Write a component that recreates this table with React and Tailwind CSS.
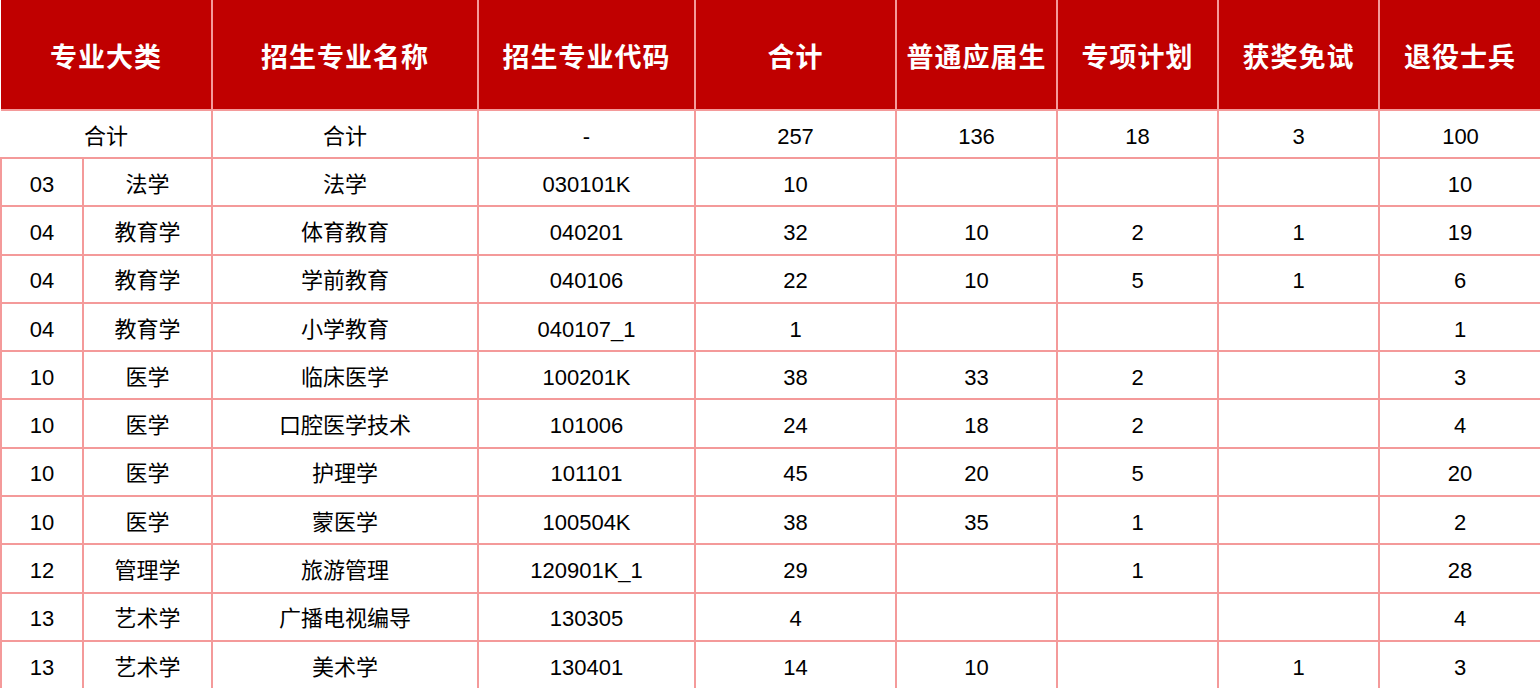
import React from "react";

const widths = [82, 129, 266, 217, 201, 161, 161, 161, 162];

const heads = ["招生专业名称", "招生专业代码", "合计", "普通应届生", "专项计划", "获奖免试", "退役士兵"];

const rows = [
  ["03", "法学", "法学", "030101K", "10", "", "", "", "10"],
  ["04", "教育学", "体育教育", "040201", "32", "10", "2", "1", "19"],
  ["04", "教育学", "学前教育", "040106", "22", "10", "5", "1", "6"],
  ["04", "教育学", "小学教育", "040107_1", "1", "", "", "", "1"],
  ["10", "医学", "临床医学", "100201K", "38", "33", "2", "", "3"],
  ["10", "医学", "口腔医学技术", "101006", "24", "18", "2", "", "4"],
  ["10", "医学", "护理学", "101101", "45", "20", "5", "", "20"],
  ["10", "医学", "蒙医学", "100504K", "38", "35", "1", "", "2"],
  ["12", "管理学", "旅游管理", "120901K_1", "29", "", "1", "", "28"],
  ["13", "艺术学", "广播电视编导", "130305", "4", "", "", "", "4"],
  ["13", "艺术学", "美术学", "130401", "14", "10", "", "1", "3"],
];

const font = { fontFamily: '"Liberation Sans", "Noto Sans CJK SC", sans-serif' };

export default function App() {
  return (
    <div className="w-[1540px] h-[688px] overflow-hidden bg-white" style={font}>
      <table className="w-[1540px] table-fixed border-collapse">
        <colgroup>
          {widths.map((w, i) => (
            <col key={i} style={{ width: w }} />
          ))}
        </colgroup>
        <thead>
          <tr className="h-[110px] bg-[#c00000] text-white">
            <th colSpan={2} className="border-r-2 border-[#f49a9a] pt-2 text-[27px] font-bold tracking-[1px]">
              专业大类
            </th>
            {heads.map((h) => (
              <th key={h} className="border-x-2 border-[#f49a9a] pt-2 text-[27px] font-bold tracking-[1px]">
                {h}
              </th>
            ))}
          </tr>
        </thead>
        <tbody className="text-[22px] text-black">
          <tr className="h-[48px]">
            <td colSpan={2} className="border-2 border-l-0 border-[#f49a9a] pt-1 text-center">合计</td>
            <td className="border-2 border-[#f49a9a] pt-1 text-center">合计</td>
            <td className="border-2 border-[#f49a9a] pt-1 text-center">-</td>
            <td className="border-2 border-[#f49a9a] pt-1 text-center">257</td>
            <td className="border-2 border-[#f49a9a] pt-1 text-center">136</td>
            <td className="border-2 border-[#f49a9a] pt-1 text-center">18</td>
            <td className="border-2 border-[#f49a9a] pt-1 text-center">3</td>
            <td className="border-2 border-r-0 border-[#f49a9a] pt-1 text-center">100</td>
          </tr>
          {rows.map((r, i) => (
            <tr key={i} className="h-[48.3px]">
              {r.map((c, j) => (
                <td key={j} className="border-2 border-[#f49a9a] pt-1 text-center">
                  {c}
                </td>
              ))}
            </tr>
          ))}
        </tbody>
      </table>
    </div>
  );
}
